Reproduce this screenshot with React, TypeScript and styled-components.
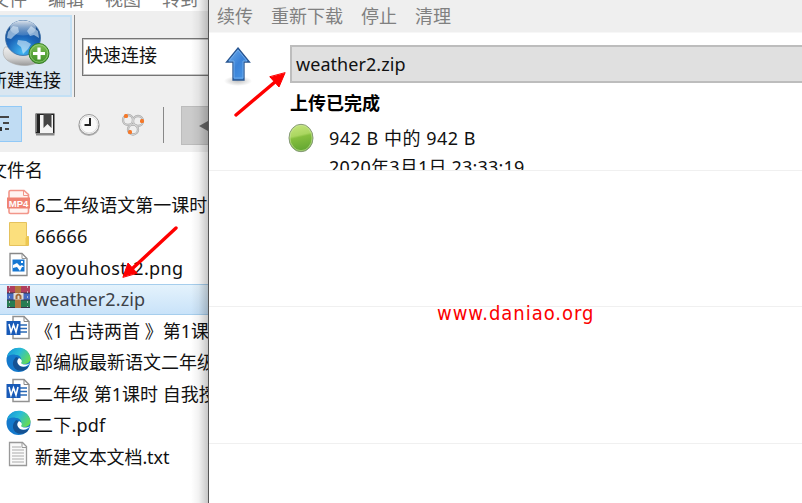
import React from 'react';
import styled, { createGlobalStyle, css } from 'styled-components';

const GlobalStyle = createGlobalStyle`
  * { box-sizing: border-box; }
  body {
    margin: 0;
    overflow: hidden;
    background: #fff;
    color: #111;
    font: 18px/26px 'Noto Sans', 'Noto Sans CJK SC', sans-serif;
  }
  svg { display: block; flex: none; }
`;

const Desktop = styled.div`
  position: relative;
  display: flex;
  width: 802px;
  height: 503px;
  overflow: hidden;
`;

const ClientWindow = styled.section`
  position: relative;
  width: 208px;
  flex: none;
  overflow: hidden;
  white-space: nowrap;
  background: #fff;
`;

const WindowShadow = styled.div`
  position: absolute;
  inset: 0 0 0 auto;
  width: 17px;
  background: linear-gradient(90deg, transparent, rgba(0, 0, 0, 0.05) 45%, rgba(0, 0, 0, 0.22));
`;

const Label = styled.span<{ $spacing?: number }>`
  white-space: pre;
  letter-spacing: ${({ $spacing = 0 }) => $spacing}px;
`;

const MenuBar = styled.nav`
  display: flex;
  align-items: flex-end;
  gap: 21px;
  height: 11px;
  margin-left: -9px;
  color: #777;
  line-height: 26px;
  & > span { margin-bottom: -1px; }
`;

const Toolbars = styled.div`
  height: 141px;
  background: #efefef;
`;

const MainToolbar = styled.div`
  display: flex;
  height: 88px;
  padding-top: 4px;
`;

const ConnectButton = styled.div`
  width: 72px;
  height: 82px;
  margin-right: 2px;
  flex: none;
  border: 2px solid #c3e0f5;
  border-left: 0;
  background: #d9e6f1;
  & > svg { margin: 1px 0 0 2px; }
  & > span { display: block; margin: -1px 0 0 -11px; }
`;

const Divider = styled.div<{ $height: number }>`
  width: 1px;
  height: ${({ $height }) => $height}px;
  flex: none;
  background: #888;
`;

const QuickConnect = styled.div`
  width: 140px;
  height: 38px;
  margin: 23px 0 0 7px;
  padding: 3px 2px;
  flex: none;
  border: 1px solid #757575;
  box-shadow: inset 0 0 0 1px #c9c9c9;
  background: #fff;
`;

const ViewToolbar = styled.div`
  display: flex;
  align-items: center;
  height: 53px;
`;

const TreeButton = styled.div`
  width: 22px;
  height: 36px;
  margin-top: -4px;
  border: 1px solid #91c9f7;
  border-left: 0;
  background: #c0dcf3;
`;

const IconSlot = styled.div<{ $left: number }>`
  margin: -2px 0 0 ${({ $left }) => $left}px;
`;

const BackButton = styled.div`
  display: flex;
  align-items: center;
  width: 40px;
  height: 39px;
  margin: 0 0 0 17px;
  padding-left: 16px;
  flex: none;
  border: 1px solid #bcbcbc;
  background: #cbcbcb;
`;

const FileHeader = styled.div`
  height: 32px;
  padding-top: 5px;
  margin-left: -11px;
`;

const FileRow = styled.div<{ $selected?: boolean }>`
  display: flex;
  align-items: center;
  gap: 3px;
  height: 31.5px;
  padding-left: 6px;
  ${({ $selected }) =>
    $selected &&
    css`
      color: #3d4248;
      border-block: 1px solid #a6ceed;
      background: linear-gradient(#e4f2fc, #c9e3f9);
    `}
  & > svg { margin-top: -5px; }
`;

const FileList = styled.div`
  padding-top: 5px;
`;

const TransferWindow = styled.section`
  flex: 1;
  border-left: 1px solid #555;
  background: #fff;
`;

const TransferToolbar = styled.nav`
  display: flex;
  gap: 18px;
  height: 33px;
  padding: 3px 8px;
  border-bottom: 1px solid #f7f7f7;
  background: #efefef;
  color: #808080;
`;

const TransferItem = styled.article`
  display: flex;
  height: 138px;
  padding-top: 12px;
  overflow: hidden;
  border-bottom: 1px solid #f0f0f0;
`;

const DirectionColumn = styled.div`
  width: 79px;
  flex: none;
  padding-left: 15px;
`;

const Details = styled.div`
  flex: 1;
  white-space: nowrap;
`;

const FileField = styled.div`
  height: 38px;
  margin-left: 2px;
  padding: 4px 4px;
  border: 2px solid #bdbdbd;
  border-right: 0;
  background: #e0e0e0;
`;

const Status = styled.div`
  height: 30px;
  padding: 7px 0 0 2px;
  color: #000;
  font-weight: 700;
`;

const ProgressLine = styled.div`
  display: flex;
  align-items: center;
  gap: 15px;
  height: 50px;
`;

const ProgressText = styled.div`
  display: flex;
  flex-direction: column;
  gap: 3px;
  padding-top: 28px;
`;

const EmptySlot = styled.div<{ $height: number }>`
  height: ${({ $height }) => $height}px;
  border-bottom: 1px solid #f0f0f0;
`;

const Watermark = styled.div`
  position: absolute;
  left: 437px;
  top: 300px;
  color: #fb0000;
  font: 20px/27px 'DejaVu Sans Condensed', 'DejaVu Sans', sans-serif;
  font-stretch: condensed;
  letter-spacing: 0.97px;
`;

const Annotations = styled.svg`
  position: absolute;
  inset: 0;
  pointer-events: none;
`;

const GlobeIcon = () => (
  <svg width="50" height="50" viewBox="0 0 50 50">
    <defs>
      <radialGradient id="globe" cx=".48" cy=".9" r=".9">
        <stop offset="0" stopColor="#42b8f4" />
        <stop offset=".5" stopColor="#1b65b9" />
        <stop offset="1" stopColor="#164781" />
      </radialGradient>
      <linearGradient id="shine" x2="0" y2="1">
        <stop stopColor="#fff" />
        <stop offset="1" stopColor="#9bbadd" stopOpacity=".3" />
      </linearGradient>
      <linearGradient id="add" x2="0" y2="1">
        <stop stopColor="#80bf56" />
        <stop offset="1" stopColor="#3b8e25" />
      </linearGradient>
      <linearGradient id="base" x2="0" y2="1">
        <stop stopColor="#eee" />
        <stop offset=".6" stopColor="#d2d2d2" />
        <stop offset="1" stopColor="#989898" />
      </linearGradient>
    </defs>
    <path d="M3 29C-1 35 2 42 10 45c8 4 22 3 28-2 6-6 3-11-2-14z" fill="url(#base)" stroke="#aaa" strokeWidth=".6" />
    <circle cx="21" cy="20" r="17.500" fill="url(#globe)" stroke="#3a6ca5" strokeWidth=".8" />
    <ellipse cx="21" cy="10" rx="13" ry="7.500" fill="url(#shine)" opacity=".85" />
    <path d="M6 14l5-6 5 1 1 5-5 4-3 3-4-1zM29 8l7 5 1 7-5-3-4 1-3-5zM16 22l8 1 5 3-3 5-5 5-2-7-4-3z" fill="#e8f4fd" opacity=".55" />
    <circle cx="37" cy="35.500" r="10" fill="url(#add)" stroke="#347e23" />
    <circle cx="37" cy="35.500" r="8.700" fill="none" stroke="#a1d785" strokeWidth=".7" />
    <path d="M37 29.500v12M31 35.500h12" stroke="#fff" strokeWidth="3.200" />
  </svg>
);

const TreeIcon = () => (
  <svg width="21" height="34" viewBox="0 0 21 34">
    <path d="M0 10h9M3 16h6M5 22h4" stroke="#444" strokeWidth="2" />
    <path d="M0 20h2v4H0z" fill="#333" />
  </svg>
);

const BookmarkIcon = () => (
  <svg width="21" height="23" viewBox="0 0 21 23">
    <path d="M.5.500h19v20H.500z" fill="#222" />
    <path d="M5 2h13v18H5z" fill="#f4f4f4" />
    <path d="M1 21.500h18.500" stroke="#888" strokeWidth="2" />
    <path d="M1.500 1v18" stroke="#777" />
    <path d="M8.500 1h8v14l-4-4-4 4z" fill="#444" />
  </svg>
);

const ClockIcon = () => (
  <svg width="24" height="24" viewBox="0 0 24 24">
    <ellipse cx="12" cy="13" rx="10.500" ry="10" fill="#b0b0b0" />
    <circle cx="12" cy="11.500" r="10" fill="#fafafa" stroke="#999" />
    <circle cx="12" cy="11.500" r="8.500" fill="none" stroke="#ddd" />
    <path d="M13 5v7H7.500" fill="none" stroke="#222" strokeWidth="2" />
  </svg>
);

const RingsIcon = () => (
  <svg width="24" height="24" viewBox="0 0 24 24">
    <g fill="none" stroke="#aaa" strokeWidth="2.300">
      <circle cx="7" cy="7" r="5" />
      <circle cx="17" cy="8" r="5" />
      <circle cx="12" cy="16.500" r="5" />
    </g>
    <g fill="none" stroke="#e1e1e1" strokeWidth=".8">
      <circle cx="7" cy="7" r="5" />
      <circle cx="17" cy="8" r="5" />
      <circle cx="12" cy="16.500" r="5" />
    </g>
    <g fill="#f57829">
      <rect x="3" y="1" width="4" height="4" rx="1.500" />
      <rect x="19" y="6" width="4" height="4" rx="1.500" />
      <rect x="7" y="17" width="4" height="4" rx="1.500" />
    </g>
  </svg>
);

const Mp4Icon = () => (
  <svg width="26" height="26" viewBox="0 0 26 26">
    <path d="M3 9V3q0-1.500 1.500-1.500H18l4.500 4V23q0 1.500-2 1.500h-16Q3 24.500 3 23v-5" fill="#fff4f1" stroke="#f2968a" strokeWidth="1.600" />
    <path d="M17.500 2v4.500h5" fill="none" stroke="#f2968a" />
    <rect x="1" y="8.500" width="23" height="11" fill="#f08373" />
    <text x="12.500" y="17.500" textAnchor="middle" fontFamily="Liberation Sans" fontSize="9.500" fontWeight="700" fill="#fff">MP4</text>
  </svg>
);

const FolderIcon = () => (
  <svg width="26" height="26" viewBox="0 0 26 26">
    <path d="M3.500 1.500h17v14h2v9h-19z" fill="#fbdf7d" stroke="#e5c25d" />
    <path d="M20.500 15.500h2v8l-3 1V17z" fill="#edc750" />
  </svg>
);

const ImageIcon = () => (
  <svg width="26" height="26" viewBox="0 0 26 26">
    <path d="M4 1.500h12l5 5v17H4z" fill="#fff" stroke="#888" strokeWidth="1.300" />
    <path d="M16 1.500v5h5" fill="none" stroke="#999" />
    <path d="M6.500 7.500h12v12h-12z" fill="#1677d2" />
    <path d="M7 13l4-2 3 3 2-1 2 2-2 0-2 4-3-4-4 1zM15 9h2v2h-2z" fill="#fff" />
  </svg>
);

const ZipIcon = () => (
  <svg width="26" height="24" viewBox="0 0 26 24">
    <path d="M1 1h23v7H1z" fill="#b0405f" />
    <path d="M1 8h23v7H1z" fill="#466ac0" />
    <path d="M1 15h23v8H1z" fill="#287d53" />
    <path d="M1 8h23M1 15h23M1 22.500h23" stroke="#38344b" />
    <path d="M3.500 1v21M21.500 1v21" stroke="#ddd" strokeWidth=".7" strokeDasharray="2 3" />
    <path d="M9 1h6v22H9z" fill="#b4773e" />
    <path d="M7.500 8h10v6.500h-10z" fill="#dfdad2" />
    <path d="M10.500 14v-3q2-3 4 0v3" fill="none" stroke="#a46a3a" strokeWidth="2" />
  </svg>
);

const WordIcon = () => (
  <svg width="26" height="26" viewBox="0 0 26 26">
    <path d="M7 1.500h11l5 5v17H7z" fill="#fff" stroke="#929292" strokeWidth="1.500" />
    <path d="M18 1.500v5h5" fill="none" stroke="#888" />
    <path d="M14 10h7M14 13.500h7M14 17h7" stroke="#2a69b5" strokeWidth="1.400" />
    <rect x=".5" y="6" width="14" height="14" fill="#185ab8" />
    <path d="M3 9l2 8 2.500-7L10 17l2-8" fill="none" stroke="#fff" strokeWidth="1.600" />
  </svg>
);

const EdgeIcon = ({ id }: { id: string }) => (
  <svg width="26" height="26" viewBox="0 0 26 26">
    <defs>
      <linearGradient id={id} x1="0" y1=".2" x2="1" y2=".7">
        <stop stopColor="#1698d9" />
        <stop offset=".45" stopColor="#2abcd7" />
        <stop offset="1" stopColor="#68dc4f" />
      </linearGradient>
    </defs>
    <circle cx="12.500" cy="13" r="12" fill="#1479cc" />
    <path d="M1 10C3-1 20-3 24 9c2 6-3 9-8 8l-2-2c3-3 0-7-4-7-4-1-7 0-9 2z" fill={`url(#${id})`} />
    <path d="M10 10c-8 8 1 18 11 12l2-3c-3 2-9 1-11-3-1-2 0-4 1-5z" fill="#145293" />
    <path d="M13 11q-4 4 1 8c4 2 8 0 10-3-3 2-7 2-9 0 2-2 0-4-2-5z" fill="#fff" />
  </svg>
);

const TextFileIcon = () => (
  <svg width="26" height="26" viewBox="0 0 26 26">
    <path d="M3.500 1.500h13l4 4v19h-17z" fill="#fafafa" stroke="#999" strokeWidth="1.300" />
    <path d="M16 1.500v5h5" fill="none" stroke="#999" />
    <path d="M6 6h9M6 9h12M6 12h12M6 15h12M6 18h12M6 21h12" stroke="#aaa" />
  </svg>
);

const UploadIcon = () => (
  <svg width="30" height="42" viewBox="0 0 30 42">
    <defs>
      <linearGradient id="upload" x2="1" y2="1">
        <stop stopColor="#76b1ed" />
        <stop offset=".5" stopColor="#3a82d8" />
        <stop offset="1" stopColor="#4b9ae8" />
      </linearGradient>
      <radialGradient id="ground">
        <stop stopColor="#777" stopOpacity=".45" />
        <stop offset="1" stopColor="#777" stopOpacity="0" />
      </radialGradient>
    </defs>
    <ellipse cx="14" cy="36" rx="14" ry="5" fill="url(#ground)" />
    <path d="M14 3l11.500 14H20v18H9V17H2.500z" fill="url(#upload)" stroke="#285590" strokeWidth="1.300" />
    <path d="M14 5l9 11h-4v17h-9V16H5z" fill="none" stroke="#78b2ed" strokeWidth=".8" />
  </svg>
);

const StatusLight = () => (
  <svg width="26" height="30" viewBox="0 0 26 30">
    <defs>
      <linearGradient id="light" x2=".2" y2="1">
        <stop stopColor="#c9e780" />
        <stop offset=".46" stopColor="#aad660" />
        <stop offset=".54" stopColor="#86bf3e" />
        <stop offset="1" stopColor="#65a833" />
      </linearGradient>
    </defs>
    <ellipse cx="13" cy="15" rx="12" ry="13.700" fill="url(#light)" stroke="#859779" />
    <ellipse cx="13" cy="15" rx="11" ry="12.700" fill="none" stroke="#cbe69d" strokeWidth=".6" />
  </svg>
);

const files = [
  { name: '6二年级语文第一课时', icon: <Mp4Icon /> },
  { name: '66666', icon: <FolderIcon />, spacing: 0.2 },
  { name: 'aoyouhost-2.png', icon: <ImageIcon />, spacing: 0.35 },
  { name: 'weather2.zip', icon: <ZipIcon />, selected: true, spacing: 0.1 },
  { name: '《1 古诗两首 》第1课时', icon: <WordIcon /> },
  { name: '部编版最新语文二年级', icon: <EdgeIcon id="edgeA" /> },
  { name: '二年级 第1课时 自我授课', icon: <WordIcon /> },
  { name: '二下.pdf', icon: <EdgeIcon id="edgeB" />, spacing: 0.2 },
  { name: '新建文本文档.txt', icon: <TextFileIcon />, spacing: -0.1 },
];

export default function App() {
  return (
    <>
      <GlobalStyle />
      <Desktop>
        <ClientWindow>
          <MenuBar>
            <span>文件</span><span>编辑</span><span>视图</span><span>转到</span>
          </MenuBar>
          <Toolbars>
            <MainToolbar>
              <ConnectButton><GlobeIcon /><span>新建连接</span></ConnectButton>
              <Divider $height={82} />
              <QuickConnect>快速连接</QuickConnect>
            </MainToolbar>
            <ViewToolbar>
              <TreeButton><TreeIcon /></TreeButton>
              <IconSlot $left={13}><BookmarkIcon /></IconSlot>
              <IconSlot $left={21}><ClockIcon /></IconSlot>
              <IconSlot $left={20}><RingsIcon /></IconSlot>
              <IconSlot $left={18}><Divider $height={36} /></IconSlot>
              <BackButton>
                <svg width="12" height="12" viewBox="0 0 12 12"><path d="M12 0v12L1 6z" fill="#666" /></svg>
              </BackButton>
            </ViewToolbar>
          </Toolbars>
          <FileHeader>文件名</FileHeader>
          <FileList>
            {files.map((file) => (
              <FileRow key={file.name} $selected={file.selected}>
                {file.icon}<Label $spacing={file.spacing}>{file.name}</Label>
              </FileRow>
            ))}
          </FileList>
          <WindowShadow />
        </ClientWindow>
        <TransferWindow>
          <TransferToolbar>
            <span>续传</span><span>重新下载</span><span>停止</span><span>清理</span>
          </TransferToolbar>
          <TransferItem>
            <DirectionColumn><UploadIcon /></DirectionColumn>
            <Details>
              <FileField><Label $spacing={0.05}>weather2.zip</Label></FileField>
              <Status>上传已完成</Status>
              <ProgressLine>
                <StatusLight />
                <ProgressText>
                  <Label $spacing={0.5}>942 B 中的 942 B</Label>
                  <Label $spacing={0.2}>2020年3月1日 23:33:19</Label>
                </ProgressText>
              </ProgressLine>
            </Details>
          </TransferItem>
          <EmptySlot $height={136} />
          <EmptySlot $height={137} />
        </TransferWindow>
        <Watermark>www.daniao.org</Watermark>
        <Annotations width="802" height="503" viewBox="0 0 802 503">
          <g stroke="red" strokeWidth="3.400" strokeLinecap="round" fill="red">
            <path d="M236 115l39-33M176 228l-43 40" />
            <path d="M285 73l-6 14-9-10zM123 277l5-14 9 10z" strokeWidth="1" />
          </g>
        </Annotations>
      </Desktop>
    </>
  );
}
